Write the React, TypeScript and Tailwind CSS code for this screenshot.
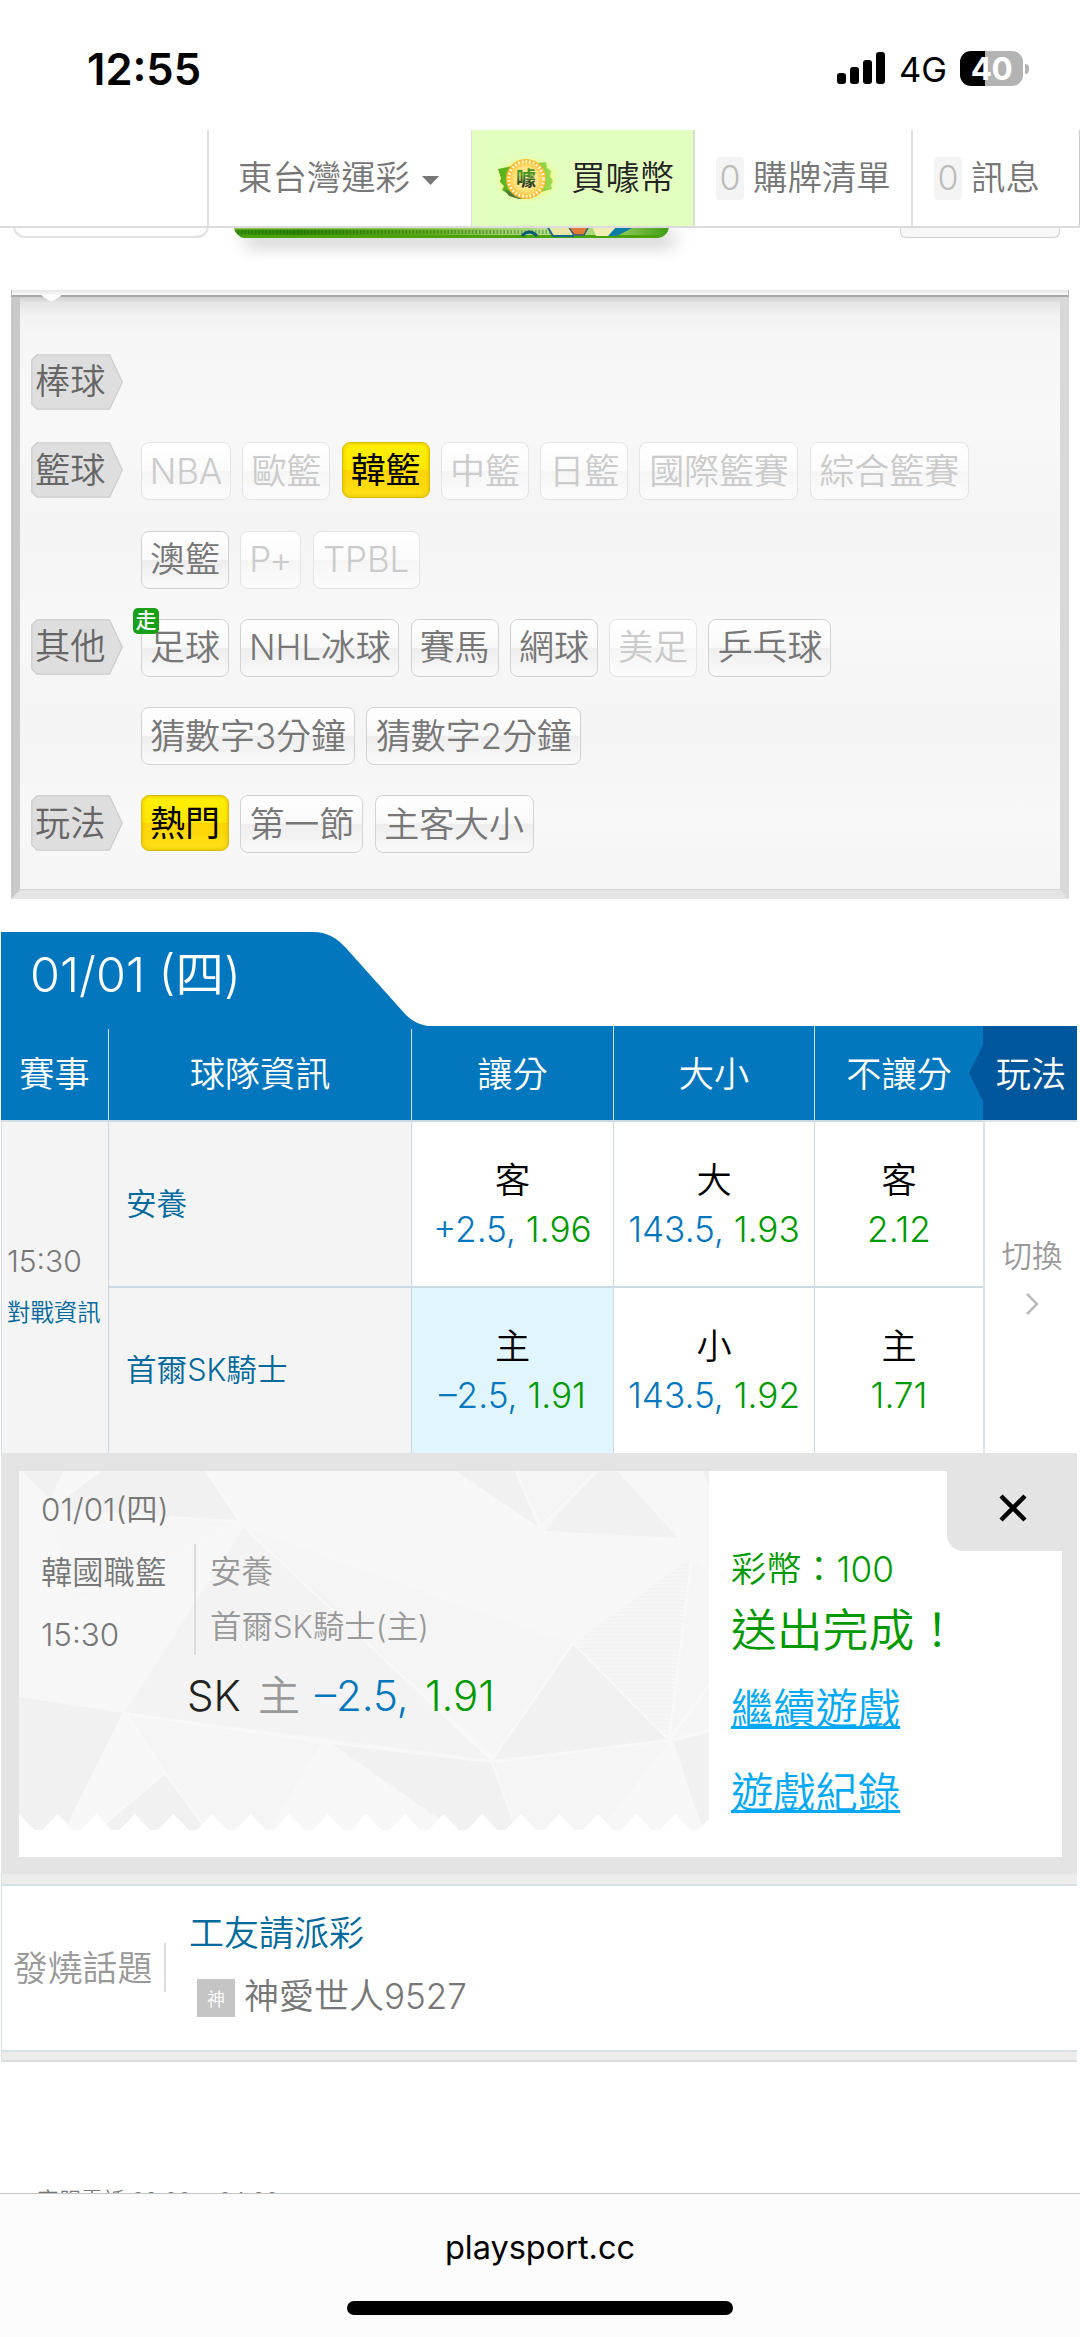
import type { ReactNode } from "react";

type ChipState = "normal" | "muted" | "active";

interface ChipData {
  label: string;
  width: string;
  state?: ChipState;
  badge?: string;
}

interface FilterRow {
  tag?: string;
  chips: ChipData[];
}

const FILTER_ROWS: FilterRow[] = [
  { tag: "棒球", chips: [] },
  {
    tag: "籃球",
    chips: [
      { label: "NBA", width: "w-[90px]", state: "muted" },
      { label: "歐籃", width: "w-[88px]", state: "muted" },
      { label: "韓籃", width: "w-[88px]", state: "active" },
      { label: "中籃", width: "w-[88px]", state: "muted" },
      { label: "日籃", width: "w-[88px]", state: "muted" },
      { label: "國際籃賽", width: "w-[159px]", state: "muted" },
      { label: "綜合籃賽", width: "w-[159px]", state: "muted" },
    ],
  },
  {
    chips: [
      { label: "澳籃", width: "w-[88px]" },
      { label: "P+", width: "w-[61px]", state: "muted" },
      { label: "TPBL", width: "w-[107px]", state: "muted" },
    ],
  },
  {
    tag: "其他",
    chips: [
      { label: "足球", width: "w-[88px]", badge: "走" },
      { label: "NHL冰球", width: "w-[159px]" },
      { label: "賽馬", width: "w-[88px]" },
      { label: "網球", width: "w-[88px]" },
      { label: "美足", width: "w-[88px]", state: "muted" },
      { label: "乒乓球", width: "w-[123px]" },
    ],
  },
  {
    chips: [
      { label: "猜數字3分鐘", width: "w-[214px]" },
      { label: "猜數字2分鐘", width: "w-[215px]" },
    ],
  },
  {
    tag: "玩法",
    chips: [
      { label: "熱門", width: "w-[88px]", state: "active" },
      { label: "第一節", width: "w-[123px]" },
      { label: "主客大小", width: "w-[159px]" },
    ],
  },
];

const CHIP_STYLE: Record<ChipState, string> = {
  normal:
    "h-[58px] border-[#d2d2d2] text-[#777] bg-[linear-gradient(#ffffff,#f9f9f9_50%,#eeeeee_50%,#f9f9f9)]",
  muted:
    "h-[58px] border-[#e4e4e4] text-[#cbcbcb] bg-[linear-gradient(#ffffff,#fbfbfb_50%,#f5f5f5_50%,#fcfcfc)]",
  active:
    "h-[56px] border-[#d9bd00] font-normal text-black bg-[linear-gradient(#fff000,#ffe800_50%,#ffd300_50%,#ffe018)] shadow-[inset_0_0_4px_#d9b800]",
};

function Chip({ label, width, state = "normal", badge }: ChipData) {
  return (
    <div
      className={`relative flex shrink-0 items-center justify-center whitespace-nowrap rounded-[8px] border-[1.5px] text-[35px] leading-none tracking-[-0.1px] ${width} ${CHIP_STYLE[state]}`}
    >
      {label}
      {badge && (
        <span className="absolute -left-[9px] -top-[12px] flex size-[26px] items-center justify-center rounded-[5px] bg-[#17a017] text-[21px] font-medium leading-none text-white">
          {badge}
        </span>
      )}
    </div>
  );
}

function Tag({ children }: { children: ReactNode }) {
  return (
    <div className="relative h-[56px] w-[92px]">
      <svg className="absolute inset-0" width="92" height="56" viewBox="0 0 92 56">
        <path
          d="M6 .8H78.500L91.300 28 78.500 55.200H6L.8 50V6z"
          fill="#dedede"
          stroke="#cdcdcd"
          strokeWidth="1.300"
        />
      </svg>
      <div className="relative flex h-full items-center pl-[4px] text-[35.2px] leading-none text-[#666]">
        {children}
      </div>
    </div>
  );
}

function StatusBar() {
  return (
    <div className="flex h-[130px] shrink-0 items-start">
      <div className="ml-[87px] mt-[46px] w-[750px] text-[43.5px] font-semibold leading-[46px] text-black">
        12:55
      </div>
      <svg className="mt-[52px]" width="48" height="32" viewBox="0 0 48 32">
        <rect x="0" y="21" width="9" height="11" rx="3" />
        <rect x="13" y="15" width="9" height="17" rx="3" />
        <rect x="26" y="8" width="9" height="24" rx="3" />
        <rect x="39" y="0" width="9" height="32" rx="3" />
      </svg>
      <div className="ml-[14px] mt-[51px] w-[61px] text-[34.500px] font-normal leading-[38px] text-black">4G</div>
      <div className="mt-[51px] flex h-[35px] w-[63px] items-center justify-center rounded-[11px] bg-[linear-gradient(90deg,#000_40%,#b3b3b3_40%)] text-[31.5px] font-bold leading-none tracking-[-0.5px] text-white">
        40
      </div>
      <div className="ml-[2px] mt-[64px] h-[10px] w-[4px] rounded-r-full bg-[#b3b3b3]" />
    </div>
  );
}

function CoinLogo() {
  return (
    <svg className="mt-[2px]" width="64" height="48" viewBox="0 0 64 48">
      <defs>
        <radialGradient id="coin">
          <stop offset="0" stopColor="#fff6c0" />
          <stop offset=".6" stopColor="#ffe27a" />
          <stop offset="1" stopColor="#ffb31f" />
        </radialGradient>
        <linearGradient id="leaf" x1="0" x2="1">
          <stop offset="0" stopColor="#57b017" />
          <stop offset="1" stopColor="#9bdc4e" />
        </linearGradient>
        <linearGradient id="glyph" x1="0" x2="0" y1="0" y2="1">
          <stop offset=".4" stopColor="#4a9424" />
          <stop offset=".75" stopColor="#26331f" />
        </linearGradient>
        <filter id="glow">
          <feGaussianBlur stdDeviation="3" />
        </filter>
      </defs>
      <ellipse cx="33" cy="24" rx="28" ry="19" fill="#f4f77e" opacity=".8" filter="url(#glow)" />
      <path d="M4 14l14-3 34-4 1 6 4 3-1 5 3 5-2 4 1 4-11 3-16 5-14-1-9-6 2-4-4-4 1-4z" fill="url(#leaf)" />
      <path d="M10 34l14 6 10 3-9 1-10-3z" fill="#4e7a39" />
      <circle cx="32" cy="24" r="20" fill="url(#coin)" />
      <circle cx="32" cy="24" r="17.500" fill="none" stroke="#fff8df" strokeWidth="3" strokeDasharray="1.600 2.100" />
      <text
        x="32"
        y="31"
        textAnchor="middle"
        fontSize="20"
        fontWeight="700"
        fill="url(#glyph)"
        fontFamily="Noto Sans CJK TC, sans-serif"
      >
        噱
      </text>
    </svg>
  );
}

function CountBadge() {
  return (
    <span className="flex h-[43px] w-[28px] items-center justify-center rounded-[4px] bg-[#f4f4f4] text-[34px] leading-none text-[#bbb]">
      0
    </span>
  );
}

function NavBar() {
  return (
    <nav className="relative z-10 flex h-[96px] shrink-0">
      <div className="flex h-[98px] w-full shrink-0 border-b-2 border-[#dcdcdc] bg-white text-[34.4px] leading-none text-[#777]">
        <div className="w-[209px] border-r-2 border-[#e0e0e0]" />
        <div className="flex w-[263px] items-center border-r border-[#ddd] pl-[29px]">
          東台灣運彩
          <svg className="ml-[12px] mt-[4px]" width="17" height="9" viewBox="0 0 17 9">
            <path d="M0 0h17L8.500 9z" fill="#777" />
          </svg>
        </div>
        <div className="flex w-[223px] items-center border-r-2 border-[#d8dfd0] bg-[#e2ffbf] pl-[22px] text-[#222]">
          <CoinLogo />
          <span className="ml-[13px]">買噱幣</span>
        </div>
        <div className="flex w-[218px] items-center border-r-2 border-[#e0e0e0] pl-[21px]">
          <CountBadge />
          <span className="ml-[9px]">購牌清單</span>
        </div>
        <div className="flex flex-1 items-center border-r border-[#ccc] pl-[21px]">
          <CountBadge />
          <span className="ml-[9px]">訊息</span>
        </div>
      </div>
    </nav>
  );
}

function BannerStrip() {
  return (
    <div className="flex h-[64px] shrink-0 items-start">
      <div className="ml-[13px] h-[12px] w-[196px] rounded-b-[15px] border-2 border-t-0 border-[#e2e2e2] bg-[#fdfdfd]" />
      <div className="ml-[25px] h-[12px] w-[435px] rounded-b-[14px] shadow-[8px_8px_18px_rgba(0,0,0,0.24)]">
        <svg className="rounded-b-[14px]" width="435" height="12" viewBox="0 0 435 12">
          <defs>
            <linearGradient id="grass" x1="0" x2="1">
              <stop offset="0" stopColor="#3b9406" />
              <stop offset=".15" stopColor="#2f8503" />
              <stop offset=".45" stopColor="#63ab20" />
              <stop offset=".7" stopColor="#b7dc8c" />
              <stop offset=".85" stopColor="#a9d873" />
              <stop offset="1" stopColor="#3f9c12" />
            </linearGradient>
          </defs>
          <rect width="435" height="12" fill="url(#grass)" />
          <path d="M0 2.500H300" stroke="#a6d66e" strokeWidth="2" opacity=".7" />
          <path d="M8 10.500H425" stroke="#4aa30b" strokeWidth="3" />
          <path d="M0 6H320" stroke="#176000" strokeWidth="4" strokeDasharray="1.500 2" opacity=".4" />
          <path d="M288 10q7-8 15 0" stroke="#0c5a78" strokeWidth="3" fill="none" />
          <path d="M313 0l6 10h20l4-10z" fill="#e9e7a8" stroke="#14698a" strokeWidth="2" />
          <path d="M334 0l6 9h10l5-9z" fill="#e27a35" stroke="#345f78" strokeWidth="1.500" />
          <path d="M358 0l4 10h14l8-10z" fill="#f1edb5" />
          <path d="M383 0l-9 10h9l17-9z" fill="#0d7fa5" />
        </svg>
      </div>
      <div className="ml-[231px] h-[12px] w-[160px] rounded-b-[6px] border-[1.5px] border-t-0 border-[#cfcfcf] bg-[#f7f7f7]" />
    </div>
  );
}

function FilterPanel() {
  return (
    <section className="mx-[11px] h-[609px] shrink-0">
      <div className="h-[7px] border-x border-b-2 border-x-[#bbb] border-b-[#a9a9a9] bg-[linear-gradient(#e6e6e6,#fafafa)]" />
      <div className="relative h-[602px] border-b-[9px] border-l-[9px] border-r-[9px] border-b-[#e4e4e4] border-l-[#c9c9c9] border-r-[#d8d8d8] bg-[#f6f6f6] bg-clip-padding">
        <div className="h-full border-b border-[#d5d5d5] bg-[linear-gradient(#cfcfcf,#e6e6e6_6px,#f2f2f2_18px,#f6f6f6_40px,#f8f8f8_130px,#f4f4f4_240px,#f8f8f8_330px,#f4f4f4_430px,#f8f8f8_520px,#f5f5f5)] pl-[11px] pt-[57px]">
          {FILTER_ROWS.map((row, i) => (
            <div key={i} className="flex h-[88.3px] items-start">
              <div className="w-[110px] shrink-0">{row.tag && <Tag>{row.tag}</Tag>}</div>
              <div className="flex gap-[11.3px]">
                {row.chips.map((chip) => (
                  <Chip key={chip.label} {...chip} />
                ))}
              </div>
            </div>
          ))}
        </div>
        <svg className="absolute -top-[2px] left-[22px]" width="19" height="8" viewBox="0 0 19 8">
          <path d="M0 0h19v1L9.500 7 0 1z" fill="#fdfdfd" />
        </svg>
      </div>
    </section>
  );
}

function Odds({ side, line, odds, highlighted }: { side: string; line?: string; odds: string; highlighted?: boolean }) {
  return (
    <div
      className={`flex flex-col items-center justify-center border-l-[1.5px] border-t-2 border-[#cddae3] pt-[1px] text-[35.2px] leading-[49px] ${highlighted ? "bg-[#e1f5fe]" : "bg-white"}`}
    >
      <div className="text-black">{side}</div>
      <div className="whitespace-nowrap text-[#009a00]">
        {line && <span className="text-[#0277bd]">{line}, </span>}
        {odds}
      </div>
    </div>
  );
}

function HeaderCell({ children }: { children: ReactNode }) {
  return (
    <div className="flex items-center justify-center border-l-[1.5px] border-[#cfe0ea] pt-[3px] text-[35.2px] leading-none">
      {children}
    </div>
  );
}

function GameTable() {
  return (
    <section className="ml-[1px] mt-[33px] w-[1076px] shrink-0">
      <div className="h-[94px]">
        <div className="relative h-[97px] w-[430px]">
          <svg className="absolute inset-0" width="430" height="97" viewBox="0 0 430 97">
            <path d="M0 0H312C326 0 336 6 345 16L405 83Q414 92 427 94V97H0z" fill="#0277bd" />
          </svg>
          <div className="relative pl-[29px] pt-[12px] text-[48.500px] leading-[62px] text-white">01/01 (四)</div>
        </div>
      </div>
      <div className="grid h-[94px] grid-cols-[107px_303px_202px_201px_169px_94px] bg-[#0277bd] text-white">
        <div className="flex items-center justify-center pt-[3px] text-[35.2px] leading-none">賽事</div>
        <HeaderCell>球隊資訊</HeaderCell>
        <HeaderCell>讓分</HeaderCell>
        <HeaderCell>大小</HeaderCell>
        <HeaderCell>不讓分</HeaderCell>
        <div className="relative flex items-center justify-center bg-[#01579b] pl-[2px] pt-[3px] text-[35.2px] leading-none">
          <svg className="absolute -left-[14px] top-[17px]" width="15" height="60" viewBox="0 0 15 60">
            <path d="M15 0L0 30 15 60z" fill="#01579b" />
          </svg>
          玩法
        </div>
      </div>
      <div className="grid h-[333px] grid-cols-[107px_303px_202px_201px_169px_94px] grid-rows-[166px_167px]">
        <div className="row-span-2 flex flex-col justify-center border-l border-t-2 border-[#d3dde4] bg-[#f4f4f4] pl-[5px]">
          <div className="text-[30px] leading-[48px] text-[#777]">15:30</div>
          <div className="pt-[3px] text-[23.4px] leading-[50px] text-[#01699b]">對戰資訊</div>
        </div>
        <div className="flex items-center border-l-[1.5px] border-t-2 border-[#cddae3] bg-[#f4f4f4] pl-[17px] text-[30.6px] leading-none text-[#01699b]">
          安養
        </div>
        <Odds side="客" line="+2.5" odds="1.96" />
        <Odds side="大" line="143.5" odds="1.93" />
        <Odds side="客" odds="2.12" />
        <div className="row-span-2 flex flex-col items-center justify-center border-l-2 border-t-2 border-[#dbe3e8] bg-white pb-[22px] pl-[2px] text-[#999]">
          <div className="text-[30.4px] leading-[40px]">切換</div>
          <svg className="mb-[2px] mt-[16px]" width="14" height="24" viewBox="0 0 14 24">
            <path d="M2 2l10 10L2 22" fill="none" stroke="#bbb" strokeWidth="2.500" />
          </svg>
        </div>
        <div className="flex items-center border-l-[1.5px] border-t-2 border-[#cddae3] bg-[#f4f4f4] pl-[17px] text-[30.6px] leading-none text-[#01699b]">
          首爾SK騎士
        </div>
        <Odds side="主" line="–2.5" odds="1.91" highlighted />
        <Odds side="小" line="143.5" odds="1.92" />
        <Odds side="主" odds="1.71" />
      </div>
    </section>
  );
}

const TEETH = Array.from({ length: 19 }, (_, i) => {
  const x = i * 38.6 - 19.3;
  return `L${x.toFixed(1)} 359L${(x + 4).toFixed(1)} 359L${(x + 19.3).toFixed(1)} 343L${(x + 34.6).toFixed(1)} 359`;
}).join("");

function TicketBackground() {
  return (
    <svg className="absolute left-0 top-0" width="690" height="359" viewBox="0 0 690 359">
      <defs>
        <pattern id="hatch" width="4" height="4" patternUnits="userSpaceOnUse">
          <rect width="4" height="4" fill="#f6f6f6" />
          <rect width="4" height="1.500" fill="#f2f2f2" />
        </pattern>
      </defs>
      <rect width="690" height="359" fill="#f7f7f7" />
      <g transform="translate(-19 -1471)">
        <path d="M244 1527L540 1633 573 1643 495 1757z" fill="#f5f5f5" />
        <path d="M244 1527L331 1603 492 1760 124 1713z" fill="#f3f3f3" />
        <path d="M129 1715L322 1742 270 1830H205z" fill="#f5f5f5" />
        <path d="M50 1517L169 1517 239 1522 75 1600z" fill="#f6f6f6" />
        <path d="M516 1471H597L545 1531z" fill="#f5f5f5" />
        <path d="M492 1762L669 1742 600 1830H515z" fill="#f5f5f5" />
        <path d="M692 1557L709 1575V1730L669 1740z" fill="#f5f5f5" />
        <g fill="#f1f1f1">
          <path d="M100 1471H206L239 1520 169 1517 50 1508z" />
          <path d="M22 1471H65L52 1500z" />
          <path d="M456 1471H516L540 1528z" />
          <path d="M597 1471H617L678 1538 545 1531z" />
          <path d="M573 1643L669 1740 492 1760z" />
          <path d="M674 1742L709 1732V1830H702z" />
          <path d="M19 1697L124 1713 66 1830H19z" />
          <path d="M165 1773L207 1830H97z" />
          <path d="M329 1742L492 1762 517 1830H455z" />
          <path d="M703 1471H709V1486z" />
        </g>
        <path d="M692 1557L574 1643 669 1740z" fill="url(#hatch)" />
        <path
          d="M22 1471L56 1520M65 1471L52 1500M100 1471L50 1508M206 1471L244 1527 492 1760M169 1517L239 1522M124 1713L165 1773 207 1830M124 1713L66 1830M165 1773L97 1830M124 1713L322 1742 492 1762 669 1740 709 1731M492 1760L573 1643 669 1740 692 1557M669 1740L709 1685M516 1471L540 1528 597 1471M669 1740L702 1830M492 1762L517 1830"
          fill="none"
          stroke="#f8f8f8"
          strokeWidth="2.500"
        />
      </g>
      <path d={`M-20 362${TEETH}L712 362z`} fill="#fff" />
    </svg>
  );
}

function BetSlip() {
  return (
    <section className="ml-[1px] w-[1076px] shrink-0 bg-[#e4e4e4] pb-[17px] pl-[18px] pr-[15px] pt-[18px]">
      <div className="relative flex h-[386px] bg-white">
        <div className="relative w-[690px] shrink-0">
          <TicketBackground />
          <div className="relative pl-[22px] text-[31.4px] text-[#777]">
            <div className="pt-[19px] leading-[40px]">01/01(四)</div>
            <div className="mt-[14px] flex">
              <div className="w-[155px] border-r-2 border-[#dcdcdc] leading-[40px]">
                <div className="mt-[9px] text-[31.3px]">韓國職籃</div>
                <div className="mt-[22px]">15:30</div>
              </div>
              <div className="pl-[14px] leading-[40px] text-[#999]">
                <div className="mt-[8px]">安養</div>
                <div className="mt-[15px]">首爾SK騎士(主)</div>
              </div>
            </div>
            <div className="mt-[13px] flex pl-[146px] text-[42px] leading-[56px]">
              <span className="w-[71px] text-[#222]">SK</span>
              <span className="w-[57px] text-[#999]">主</span>
              <span className="w-[110px] text-[#0277bd]">–2.5,</span>
              <span className="text-[#009a00]">1.91</span>
            </div>
          </div>
        </div>
        <div className="pl-[22px] pt-[73px] text-[#009a00]">
          <div className="text-[35.2px] leading-[50px]">彩幣：100</div>
          <div className="text-[45.8px] leading-[74px]">送出完成！</div>
          <div className="mt-[9px] text-[42.300px] leading-[64px] text-[#03a9f4] underline decoration-[3px] underline-offset-[2px]">
            繼續遊戲
          </div>
          <div className="mt-[20px] text-[42.300px] leading-[64px] text-[#03a9f4] underline decoration-[3px] underline-offset-[2px]">
            遊戲紀錄
          </div>
        </div>
        <button className="absolute -right-[15px] top-0 flex h-[80px] w-[130px] items-center justify-center rounded-bl-[16px] bg-[#e4e4e4] pb-[6px] pl-[2px]">
          <svg width="28" height="28" viewBox="0 0 28 28">
            <path d="M2 2l24 24M26 2L2 26" stroke="#000" strokeWidth="4.500" />
          </svg>
        </button>
      </div>
    </section>
  );
}

function HotTopic() {
  return (
    <section className="ml-[1px] w-[1076px] shrink-0 border-l border-[#d5dfe4]">
      <div className="h-[12px] border-b-2 border-[#d5dfe4] bg-[#ededed]" />
      <div className="flex h-[164px] items-start">
        <div className="mt-[57px] flex h-[49px] w-[164px] items-center border-r-2 border-[#ddd] pl-[11px] pt-[2px] text-[34.8px] leading-none text-[#999]">
          發燒話題
        </div>
        <div className="pl-[23px] pt-[22px]">
          <div className="text-[35px] leading-[50px] text-[#01699b]">工友請派彩</div>
          <div className="mt-[13px] flex items-start pl-[8px]">
            <span className="mt-[8px] flex size-[38px] items-center justify-center bg-[#c5c5c5] pt-[3px] text-[18px] leading-none text-white">
              神
            </span>
            <span className="ml-[9px] text-[35px] leading-[50px] text-[#777]">神愛世人9527</span>
          </div>
        </div>
      </div>
      <div className="h-[12px] border-y-2 border-b-[#dcdcdc] border-t-[#d5dfe4] bg-[#ececec]" />
    </section>
  );
}

function BrowserBar() {
  return (
    <footer className="flex h-[144px] shrink-0 flex-col items-center border-t border-[#c4c4c4] bg-[#fcfcfc]">
      <div className="mt-[32px] text-[32.5px] font-normal leading-[44px] text-black">playsport.cc</div>
      <div className="mt-[31px] h-[14px] w-[386px] rounded-full bg-black" />
    </footer>
  );
}

export default function App() {
  return (
    <div className="flex h-[2337px] w-[1080px] flex-col overflow-hidden bg-white font-['Inter','Noto_Sans_CJK_TC',sans-serif] font-[350]">
      <StatusBar />
      <NavBar />
      <BannerStrip />
      <FilterPanel />
      <GameTable />
      <BetSlip />
      <HotTopic />
      <div className="h-0 flex-1 overflow-hidden pl-[37px] pt-[123px]">
        <div className="whitespace-pre text-[22px] leading-[30px] text-[#777]">客服電話 09:00 ~ 04:00</div>
      </div>
      <BrowserBar />
    </div>
  );
}
